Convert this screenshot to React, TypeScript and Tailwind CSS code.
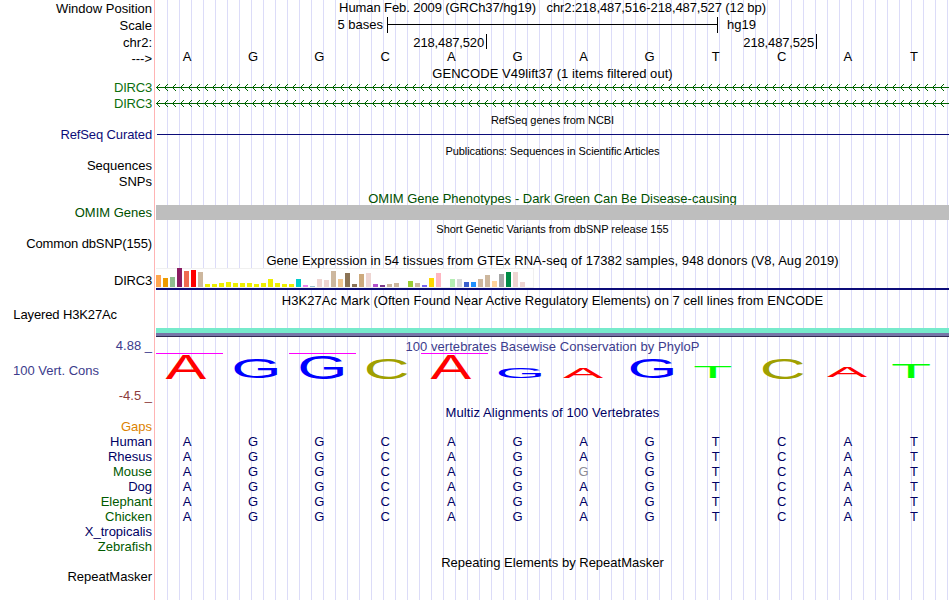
import type { ReactNode } from 'react'

const BASES = 'AGGCAGAGTCAT'

// [height, color] for each of the GTEx tissues
const TISSUES: [number, string][] = [
  [12, '#ffa54f'], [9, '#ee9a00'], [10, '#8fbc8f'], [19, '#8b1c62'], [16, '#ee6a50'], [17, '#ff0000'],
  [15, '#cdb79e'], [3, '#eeee00'], [3, '#eeee00'], [4, '#eeee00'], [5, '#eeee00'], [4, '#eeee00'],
  [4, '#eeee00'], [4, '#eeee00'], [3, '#eeee00'], [4, '#eeee00'], [8, '#eeee00'], [4, '#eeee00'],
  [3, '#eeee00'], [3, '#eeee00'], [8, '#00cdcd'], [2, '#ee82ee'], [1, '#9ac0cd'], [8, '#eed5d2'],
  [7, '#eed5d2'], [16, '#cdb79e'], [8, '#eec591'], [14, '#8b7355'], [3, '#8b7355'], [13, '#cdaa7d'],
  [14, '#eed5d2'], [3, '#b452cd'], [2, '#7a378b'], [3, '#cdb79e'], [4, '#cdb79e'], [0, '#cdb79e'],
  [6, '#9acd32'], [4, '#cdb79e'], [2, '#7a67ee'], [9, '#ffd700'], [14, '#ffb6c1'], [0, '#cd9b1d'],
  [8, '#b4eeb4'], [8, '#d9d9d9'], [5, '#3a5fcd'], [5, '#1e90ff'], [8, '#cdb79e'], [12, '#cdb79e'],
  [6, '#ffd39b'], [13, '#a6a6a6'], [15, '#008b45'], [15, '#eed5d2'], [5, '#eed5d2'], [0, '#ff00ff'],
]

// glyph ink box at font-size 100: left, right, bottom overshoot, top
const INK: Record<string, [number, number, number, number]> = {
  A: [0.2, 66.5, 0, 68.8],
  G: [5, 71.4, 1, 69.8],
  C: [5, 68.8, 1, 69.8],
  T: [2.1, 58.9, 0, 68.8],
}

const LOGO_COLORS: Record<string, string> = { A: '#ff0000', G: '#0000ff', C: '#a0a000', T: '#00ff00' }

// base, left, right, top, bottom inside the conservation track
const LOGO: [string, number, number, number, number][] = [
  ['A', 9.5, 50, 17, 41],
  ['G', 78.5, 121.5, 21, 40.5],
  ['G', 144.5, 187.5, 17, 41],
  ['C', 211, 251.5, 20, 41],
  ['A', 274.5, 315, 17, 41],
  ['G', 342.8, 385.5, 29.3, 40],
  ['A', 407, 447, 30.3, 40],
  ['G', 474.8, 517.5, 21, 40.5],
  ['T', 538.5, 575, 29.3, 40],
  ['C', 607, 647.5, 20, 41],
  ['A', 671, 711, 28.3, 39],
  ['T', 736.5, 774, 26.3, 40],
]

const SPECIES = [
  { name: 'Human', color: 'text-[#000064]', seq: BASES },
  { name: 'Rhesus', color: 'text-[#000064]', seq: BASES },
  { name: 'Mouse', color: 'text-[#005a00]', seq: BASES },
  { name: 'Dog', color: 'text-[#000064]', seq: BASES },
  { name: 'Elephant', color: 'text-[#005a00]', seq: BASES },
  { name: 'Chicken', color: 'text-[#005a00]', seq: BASES },
  { name: 'X_tropicalis', color: 'text-[#000064]', seq: '' },
  { name: 'Zebrafish', color: 'text-[#005a00]', seq: '' },
]

function Row({ label = '', className = 'h-4', labelClass = '', children }: {
  label?: string
  className?: string
  labelClass?: string
  children?: ReactNode
}) {
  return (
    <div className={`flex shrink-0 ${className}`}>
      <div className={`w-[152px] shrink-0 text-right ${labelClass}`}>{label}</div>
      <div className="ml-0.5 w-[793px] shrink-0">{children}</div>
    </div>
  )
}

function Title({ className = '', children }: { className?: string; children: ReactNode }) {
  return (
    <div className="flex w-[797px] justify-center">
      <span className={className}>{children}</span>
    </div>
  )
}

function Bases({ seq, className = '', mismatch = '' }: { seq: string; className?: string; mismatch?: string }) {
  return (
    <div className={`grid grid-cols-12 text-center ${className}`}>
      {seq.split('').map((b, i) =>
        mismatch && i === 6
          ? <span key={i} className="text-[#8c8c96]">{mismatch}</span>
          : <span key={i}>{b}</span>
      )}
    </div>
  )
}

function Intron() {
  return (
    <svg className="ml-0.5 block" width="793" height="16" shapeRendering="crispEdges" fill="none" stroke="#006400">
      <path d="M0 7.5H793" />
      {Array.from({ length: 99 }, (_, i) => (
        <path key={i} transform={`translate(${i * 8} 0)`} d="M4 4.5H3M3 5.5H2M2 6.5H1M2 8.5H1M3 9.5H2M4 10.5H3" />
      ))}
    </svg>
  )
}

function Logo() {
  return (
    <svg className="ml-0.5 block" width="793" height="50" fontFamily="Liberation Sans, Arial, sans-serif" fontSize="100">
      <path d="M0 15.5H67M133 15.5H200M265 15.5H332" stroke="#ff00ff" shapeRendering="crispEdges" />
      {LOGO.map(([base, left, right, top, bottom], i) => {
        const [l, r, under, over] = INK[base]
        const sx = (right - left) / (r - l)
        const sy = (bottom - top) / (over + under)
        return (
          <text key={i} fill={LOGO_COLORS[base]} transform={`translate(${left - l * sx} ${bottom - under * sy}) scale(${sx} ${sy})`}>
            {base}
          </text>
        )
      })}
    </svg>
  )
}

export default function App() {
  return (
    <div className="h-[600px] w-[950px] overflow-hidden bg-white">
      <div className="flex h-[600px] w-[949px] flex-col overflow-hidden whitespace-pre bg-[linear-gradient(90deg,#fff_154px,#ffb4b4_154px,#ffb4b4_155px,#fff_155px,#fff_156px,transparent_156px),repeating-linear-gradient(90deg,transparent_0,transparent_11px,#dcdcf8_11px,#dcdcf8_12px)] font-['Liberation_Sans',Arial,sans-serif] text-[13px] leading-4 text-black">
        <Row label="Window Position" className="h-[17px]" labelClass="pt-px">
          <Title className="tracking-[-0.09px]">{'Human Feb. 2009 (GRCh37/hg19)   chr2:218,487,516-218,487,527 (12 bp)'}</Title>
        </Row>
        <Row label="Scale" className="h-[17px]" labelClass="pt-px">
          <div className="flex items-start">
            <span className="w-[229px] text-right">5 bases</span>
            <div className="ml-1 h-4 w-[331px] border-x border-black pt-[7px]">
              <div className="h-px w-full bg-black" />
            </div>
            <span className="ml-[9px]">hg19</span>
          </div>
        </Row>
        <Row label="chr2:" className="h-[15px]" labelClass="pt-px">
          <div className="flex tracking-[-0.15px]">
            <div className="flex w-[333px] justify-end">
              <span className="pt-px">218,487,520</span>
              <div className="ml-0.5 h-[15px] w-px bg-black" />
            </div>
            <div className="flex w-[330px] justify-end">
              <span className="pt-px">218,487,525</span>
              <div className="ml-0.5 h-[15px] w-px bg-black" />
            </div>
          </div>
        </Row>
        <Row label="--->" className="h-[17px]" labelClass="pt-0.5">
          <Bases seq={BASES} />
        </Row>
        <Row className="h-[14px]">
          <Title className="tracking-[0.05px]">GENCODE V49lift37 (1 items filtered out)</Title>
        </Row>
        <Row label="DIRC3" labelClass="text-[#0c6e0c] tracking-[-0.2px]">
          <Intron />
        </Row>
        <Row label="DIRC3" labelClass="text-[#0c6e0c] tracking-[-0.2px]">
          <Intron />
        </Row>
        <Row className="h-[15px]">
          <Title className="text-[11px] tracking-[-0.04px]">RefSeq genes from NCBI</Title>
        </Row>
        <Row label="RefSeq Curated" labelClass="text-[#0c0c78] tracking-[-0.12px]">
          <div className="ml-[3px] mt-[7px] h-px w-[792px] bg-[#0c0c78]" />
        </Row>
        <Row className="h-[15px]">
          <Title className="text-[11px] tracking-[-0.08px]">Publications: Sequences in Scientific Articles</Title>
        </Row>
        <Row label="Sequences" />
        <Row label="SNPs" />
        <Row className="h-[15px]">
          <Title className="pt-px text-[#005000]">OMIM Gene Phenotypes - Dark Green Can Be Disease-causing</Title>
        </Row>
        <Row label="OMIM Genes" className="h-[16px]" labelClass="text-[#005000]">
          <div className="ml-0.5 h-[15px] w-[793px] bg-[#bebebe]" />
        </Row>
        <Row className="h-[15px]">
          <Title className="text-[11px] tracking-[-0.02px]">Short Genetic Variants from dbSNP release 155</Title>
        </Row>
        <Row label="Common dbSNP(155)" labelClass="tracking-[-0.12px]" />
        <Row>
          <Title className="pt-px tracking-[0.055px]">Gene Expression in 54 tissues from GTEx RNA-seq of 17382 samples, 948 donors (V8, Aug 2019)</Title>
        </Row>
        <Row label="DIRC3" className="h-[24px]" labelClass="pt-[5px] tracking-[-0.2px]">
          <div className="ml-0.5 flex h-5 w-[378px] items-end gap-0.5 border-y border-r border-[#f0f0f0] bg-white">
            {TISSUES.map(([height, color], i) => (
              <div key={i} className="w-[5px] shrink-0" style={{ height, backgroundColor: color }} />
            ))}
          </div>
          <div className="ml-0.5 h-0.5 w-[793px] bg-[#0c0c78]" />
        </Row>
        <Row className="h-[15px]">
          <Title className="pt-px tracking-[0.045px]">H3K27Ac Mark (Often Found Near Active Regulatory Elements) on 7 cell lines from ENCODE</Title>
        </Row>
        <Row label="Layered H3K27Ac" className="h-[31px]" labelClass="pr-[35px] tracking-[-0.12px]">
          <div className="ml-0.5 mt-[21px] w-[793px]">
            <div className="h-[5px] bg-[#76eacb]" />
            <div className="h-[3px] bg-[#7676a8]" />
            <div className="h-px bg-[#302850]" />
          </div>
        </Row>
        <div className="flex h-[66px] shrink-0">
          <div className="flex w-[152px] flex-col text-right text-[#3c3c8c]">
            <span>4.88 _</span>
            <span className="mt-[9px] pr-[53px]">100 Vert. Cons</span>
            <span className="mt-[9px] text-[#8c3c3c]">-4.5 _</span>
          </div>
          <div className="ml-0.5 w-[793px]">
            <Title className="pt-px text-[#3c3c8c] tracking-[0.04px]">100 vertebrates Basewise Conservation by PhyloP</Title>
            <div className="-mt-[17px]">
              <Logo />
            </div>
          </div>
        </div>
        <Row className="h-[15px]">
          <Title className="pt-px text-[#000064] tracking-[0.08px]">Multiz Alignments of 100 Vertebrates</Title>
        </Row>
        <Row label="Gaps" className="h-[15px]" labelClass="text-[#dc8200]" />
        {SPECIES.map((s) => (
          <Row key={s.name} label={s.name} className="h-[15px]" labelClass={s.color}>
            <Bases seq={s.seq} className="text-[#000064]" mismatch={s.name === 'Mouse' ? 'G' : ''} />
          </Row>
        ))}
        <Row className="h-[15px]">
          <Title className="pt-px">Repeating Elements by RepeatMasker</Title>
        </Row>
        <Row label="RepeatMasker" />
      </div>
    </div>
  )
}
